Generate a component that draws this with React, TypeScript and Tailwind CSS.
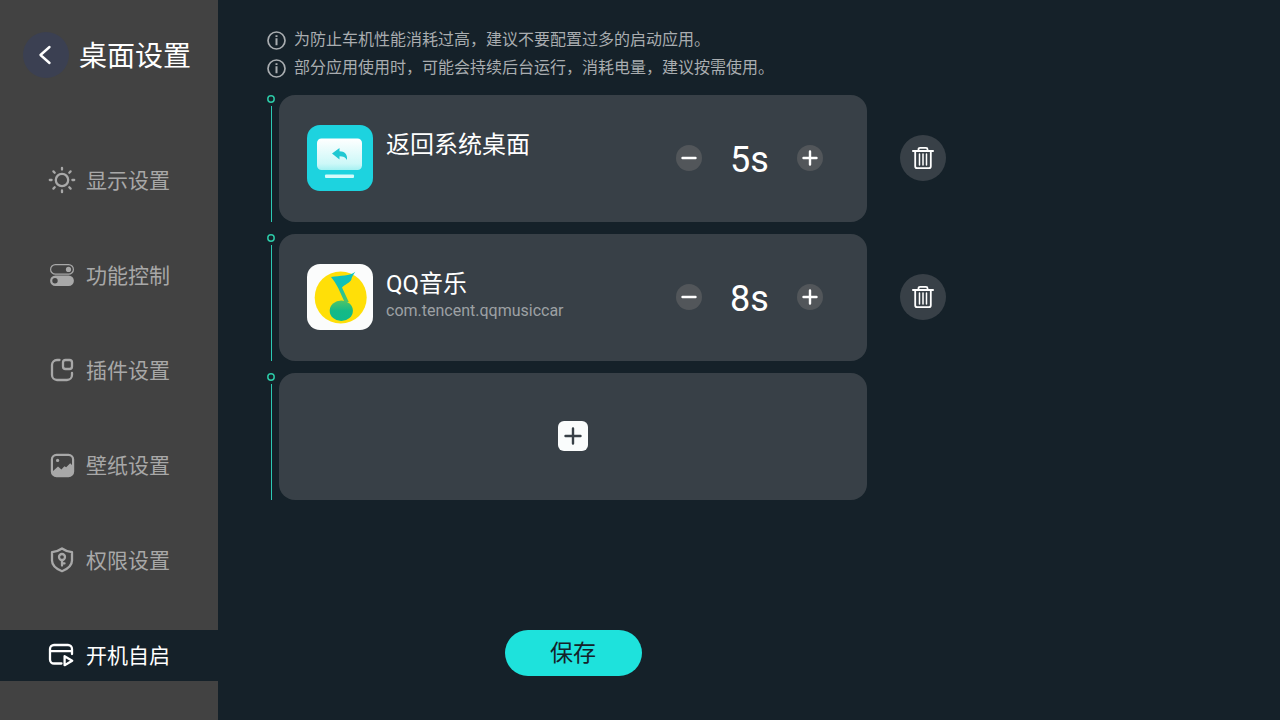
import { useState } from 'react';
import type { ReactNode } from 'react';

type StartupApp = {
    id: number;
    name: string;
    packageName?: string;
    delay: number;
    icon: ReactNode;
};

function SunIcon() {
    return (
        <svg width="28" height="28" viewBox="0 0 28 28" fill="none" stroke="currentColor" strokeWidth="2.3" strokeLinecap="round">
            <circle cx="14" cy="14" r="6.2" />
            <path d="M14 1.8v1.8M14 24.4v1.8M1.8 14h1.8M24.4 14h1.8M5.4 5.4l1.3 1.3M21.3 21.3l1.3 1.3M5.4 22.6l1.3-1.3M21.3 6.7l1.3-1.3" />
        </svg>
    );
}

function TogglesIcon() {
    return (
        <svg width="28" height="28" viewBox="0 0 28 28" fill="none">
            <rect x="2.6" y="3.6" width="22.8" height="9.6" rx="4.8" stroke="currentColor" strokeWidth="1.2" />
            <circle cx="20.5" cy="8.4" r="2.6" fill="currentColor" />
            <path fillRule="evenodd" clipRule="evenodd" fill="currentColor" d="M7.4 14.4h13.2a5.2 5.2 0 0 1 0 10.6H7.4a5.2 5.2 0 0 1 0-10.6ZM7 17a2.7 2.7 0 1 0 0 5.4A2.7 2.7 0 0 0 7 17Z" />
        </svg>
    );
}

function WidgetIcon() {
    return (
        <svg width="28" height="28" viewBox="0 0 28 28" fill="none" stroke="currentColor" strokeWidth="2.3" strokeLinecap="round">
            <path d="M11.5 4H9a5 5 0 0 0-5 5v10a5 5 0 0 0 5 5h10a5 5 0 0 0 5-5v-2" />
            <rect x="15" y="4" width="9" height="9" rx="2.6" />
        </svg>
    );
}

function WallpaperIcon() {
    return (
        <svg width="28" height="28" viewBox="0 0 28 28" fill="none">
            <rect x="3.9" y="3.9" width="21.2" height="21.2" rx="4.6" stroke="currentColor" strokeWidth="2.2" />
            <circle cx="9.6" cy="9.4" r="1.6" fill="currentColor" />
            <path fill="currentColor" d="M4 21l6-5.6 3.4 3.2 3-3.4 1.8 1 4-4 3 3V21a4.6 4.6 0 0 1-4.6 4.4H8.4A4.6 4.6 0 0 1 4 21Z" />
        </svg>
    );
}

function ShieldIcon() {
    return (
        <svg width="28" height="28" viewBox="0 0 28 28" fill="none" stroke="currentColor" strokeWidth="2.3" strokeLinecap="round" strokeLinejoin="round">
            <path d="M14 2.5c3 2.2 6.2 3.3 10 3.6v8.4c0 4.800-4 8.300-10 10.700-6-2.400-10-5.900-10-10.700V6.100c3.800-.3 7-1.400 10-3.600Z" />
            <circle cx="14" cy="11" r="3" />
            <path d="M14 14.200v5.300M14.500 17.400h2" />
        </svg>
    );
}

function AutoStartIcon() {
    return (
        <svg width="28" height="28" viewBox="0 0 28 28" fill="none" stroke="currentColor" strokeWidth="2.3" strokeLinecap="round" strokeLinejoin="round">
            <path d="M13.500 22.500H6a4 4 0 0 1-4-4V8a4 4 0 0 1 4-4h14a4 4 0 0 1 4 4v5M2.200 10.200h21.600" />
            <path d="M16.600 15.200v9l7.600-4.500Z" />
        </svg>
    );
}

function DesktopAppIcon() {
    return (
        <svg className="size-full" viewBox="0 0 66 66">
            <defs>
                <linearGradient id="screen" x1="0" y1="0" x2="0" y2="1">
                    <stop offset="0" stopColor="#fff" />
                    <stop offset="0.8" stopColor="#cdf8f8" />
                    <stop offset="1" stopColor="#a5f1f2" />
                </linearGradient>
            </defs>
            <rect width="66" height="66" fill="#1dd3df" />
            <rect x="10" y="13.5" width="45" height="31.5" rx="4.5" fill="url(#screen)" />
            <rect x="18" y="49.500" width="29" height="3.500" rx="1" fill="#d5fafa" />
            <path d="M25 28.500l7.500-5.500v3.200c5.200 0 8.200 3.200 7.500 8.800-1.600-2.800-3.800-3.800-7.500-3.800v3.200Z" fill="#20c8d2" />
        </svg>
    );
}

function MusicAppIcon() {
    return (
        <svg className="size-full" viewBox="0 0 66 66">
            <defs>
                <linearGradient id="stem" x1="0" y1="0" x2="0" y2="1">
                    <stop offset="0" stopColor="#0bc0c4" />
                    <stop offset="0.5" stopColor="#12c2b0" />
                    <stop offset="1" stopColor="#4fc468" />
                </linearGradient>
                <linearGradient id="head" x1="0" y1="0" x2="0" y2="1">
                    <stop offset="0" stopColor="#4fc468" />
                    <stop offset="0.5" stopColor="#14ba86" />
                    <stop offset="1" stopColor="#10b98c" />
                </linearGradient>
            </defs>
            <rect width="66" height="66" fill="#fbfcfc" />
            <circle cx="33.700" cy="33.500" r="26" fill="#ffdf08" />
            <path d="M48.300 7.700C43 12.300 33 11.300 24 13c2.600 3 5 6.700 7.200 11L37.500 38h4.300l-6.800-14.500c2.500-3 7.500-4.300 9.200-7.500.6-3 2.300-5.600 4.100-8.300Z" fill="url(#stem)" />
            <ellipse cx="34.300" cy="46.800" rx="11.600" ry="10.200" fill="url(#head)" />
        </svg>
    );
}

function TrashIcon() {
    return (
        <svg width="24" height="24" viewBox="0 0 24 24" fill="none" stroke="currentColor" strokeWidth="1.8" strokeLinecap="round" strokeLinejoin="round">
            <path d="M1.900 5h20.200M7.500 4.600V3.300a1.500 1.500 0 0 1 1.500-1.500h6a1.500 1.500 0 0 1 1.500 1.500v1.300" />
            <path d="M4.200 5.200v15a2 2 0 0 0 2 2h11.600a2 2 0 0 0 2-2v-15" />
            <path strokeWidth="1.5" d="M8.500 8v11M12 8v11M15.500 8v11" />
        </svg>
    );
}

const navItems = [
    { label: '显示设置', icon: <SunIcon /> },
    { label: '功能控制', icon: <TogglesIcon /> },
    { label: '插件设置', icon: <WidgetIcon /> },
    { label: '壁纸设置', icon: <WallpaperIcon /> },
    { label: '权限设置', icon: <ShieldIcon /> },
    { label: '开机自启', icon: <AutoStartIcon /> },
];

const tips = [
    '为防止车机性能消耗过高，建议不要配置过多的启动应用。',
    '部分应用使用时，可能会持续后台运行，消耗电量，建议按需使用。',
];

const initialApps: StartupApp[] = [
    { id: 1, name: '返回系统桌面', delay: 5, icon: <DesktopAppIcon /> },
    { id: 2, name: 'QQ音乐', packageName: 'com.tencent.qqmusiccar', delay: 8, icon: <MusicAppIcon /> },
];

function Tip({ children }: { children: ReactNode }) {
    return (
        <p className="flex items-center gap-2 text-base leading-7 text-[#a9adb0]">
            <svg className="mt-px shrink-0" width="19" height="19" viewBox="0 0 19 19" fill="none" stroke="currentColor">
                <circle cx="9.500" cy="9.500" r="8.500" strokeWidth="1.700" />
                <path d="M9.500 7.200v7M9.500 4.200v1.900" strokeWidth="2" />
            </svg>
            {children}
        </p>
    );
}

// Dot and vertical line on the left of every card
function Rail() {
    return (
        <div className="mr-1 flex w-2 shrink-0 flex-col gap-[3px]">
            <svg width="8" height="8" viewBox="0 0 8 8" fill="none">
                <circle cx="4" cy="4" r="3.2" stroke="#2cc9a6" strokeWidth="1.5" />
            </svg>
            <span className="ml-1 w-px flex-1 bg-[#2cc9b4]" />
        </div>
    );
}

function StepButton({ label, plus, onClick }: { label: string, plus?: boolean, onClick: () => void }) {
    return (
        <button aria-label={label} onClick={onClick} className="flex size-[26px] items-center justify-center rounded-full bg-[#52565a] text-white">
            <svg width="18" height="18" viewBox="0 0 18 18" fill="none" stroke="currentColor" strokeWidth="2.4" strokeLinecap="round">
                <path d={plus ? 'M2.500 9h13M9 2.500v13' : 'M2.500 9h13'} />
            </svg>
        </button>
    );
}

export default function App() {
    const [active, setActive] = useState('开机自启');
    const [apps, setApps] = useState(initialApps);

    const changeDelay = (id: number, step: number) => {
        setApps(apps.map((app) => (app.id === id ? { ...app, delay: Math.max(0, app.delay + step) } : app)));
    };

    return (
        <div className="flex min-h-screen bg-[#152129] font-[Roboto,'Noto_Sans_CJK_SC',sans-serif] text-white">
            <aside className="w-[218px] shrink-0 bg-[#424242] pt-8">
                <div className="flex items-center gap-[10px] pl-[23px]">
                    <button aria-label="返回" className="flex size-[46px] items-center justify-center rounded-full bg-[#3b4052]">
                        <svg width="24" height="24" viewBox="0 0 24 24" fill="none" stroke="currentColor" strokeWidth="2.400" strokeLinecap="round" strokeLinejoin="round">
                            <path d="M15.500 4L6.500 12l9 8" />
                        </svg>
                    </button>
                    <h1 className="pt-1 text-[28px] leading-[42px]">桌面设置</h1>
                </div>
                <nav className="mt-[77px] flex flex-col gap-11">
                    {navItems.map((item) => (
                        <button
                            key={item.label}
                            onClick={() => setActive(item.label)}
                            className={`flex h-[51px] items-center gap-[10px] pb-px pl-12 text-[21px] ${active === item.label ? 'bg-[#152129] text-white' : 'text-[#a8a8a8]'}`}
                        >
                            {item.icon}
                            <span className="pt-1">{item.label}</span>
                        </button>
                    ))}
                </nav>
            </aside>

            <main className="flex min-w-0 flex-1 flex-col pt-[26px] pr-8 pb-11 pl-[49px]">
                {tips.map((tip) => (
                    <Tip key={tip}>{tip}</Tip>
                ))}

                <ul className="mt-[13px] flex flex-col gap-3">
                    {apps.map((app) => (
                        <li key={app.id} className="flex">
                            <Rail />
                            <div className="flex h-[127px] max-w-[588px] flex-1 items-center rounded-2xl bg-[#384047] pr-11 pb-px pl-7">
                                <div className="size-[66px] shrink-0 overflow-hidden rounded-[13px]">{app.icon}</div>
                                <div className="ml-[13px] h-[54px] flex-1">
                                    <h2 className="text-2xl leading-7">{app.name}</h2>
                                    <p className="text-base leading-[26px] text-[#9da1a4]">{app.packageName}</p>
                                </div>
                                <div className="flex items-center">
                                    <StepButton label="减少" onClick={() => changeDelay(app.id, -1)} />
                                    <span className="w-[95px] pt-1 text-center text-4xl">{app.delay}s</span>
                                    <StepButton label="增加" plus onClick={() => changeDelay(app.id, 1)} />
                                </div>
                            </div>
                            <div className="ml-[33px] flex shrink-0 items-center pb-px">
                                <button
                                    aria-label="删除"
                                    onClick={() => setApps(apps.filter((a) => a.id !== app.id))}
                                    className="flex size-[46px] items-center justify-center rounded-full bg-[#384047]"
                                >
                                    <TrashIcon />
                                </button>
                            </div>
                        </li>
                    ))}
                    <li className="flex">
                        <Rail />
                        <button aria-label="添加应用" className="flex h-[127px] max-w-[588px] flex-1 items-center justify-center rounded-2xl bg-[#384047] pb-px">
                            <span className="flex size-[30px] items-center justify-center rounded-md bg-[#fafcfc] text-[#384047]">
                                <svg width="20" height="20" viewBox="0 0 20 20" fill="none" stroke="currentColor" strokeWidth="2.400" strokeLinecap="round">
                                    <path d="M2.500 10h15M10 2.500v15" />
                                </svg>
                            </span>
                        </button>
                    </li>
                </ul>

                <div className="mt-auto flex max-w-[600px] justify-center pl-3">
                    <button className="h-[46px] w-[137px] rounded-full bg-[#1ee2dc] pt-[3px] text-[23px] text-[#152129]">保存</button>
                </div>
            </main>
        </div>
    );
}
